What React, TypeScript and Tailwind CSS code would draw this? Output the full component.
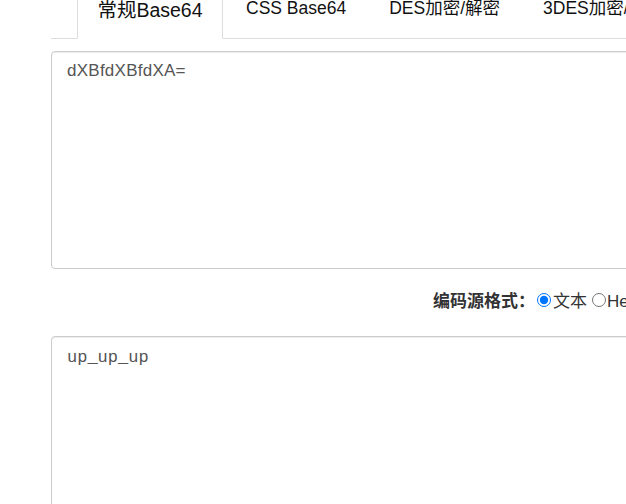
import React from "react";

export default function App() {
  const sans = '"Liberation Sans", "Noto Sans CJK SC", sans-serif';
  return (
    <div className="w-[626px] h-[504px] overflow-hidden bg-white" style={{ fontFamily: sans }}>
      <div className="w-[900px] pl-[51px]">
        {/* Tabs */}
        <ul className="flex h-[39px] border-b border-[#ddd]">
          <li className="ml-[26px] mr-[3px] -mb-px h-[39px] w-[146px] border border-t-0 border-[#ddd] border-b-white bg-white text-center text-[19.5px] leading-[20px] text-[#111]">
            常规Base64
          </li>
          <li className="mr-[3px] px-[20px] text-[17.5px] leading-[17px] text-[#111]">CSS Base64</li>
          <li className="mr-[3px] px-[20px] text-[17.5px] leading-[17px] text-[#111]">DES加密/解密</li>
          <li className="mr-[3px] px-[20px] text-[17.5px] leading-[17px] text-[#111]">3DES加密/解密</li>
        </ul>

        {/* First textarea */}
        <textarea
          readOnly
          defaultValue="dXBfdXBfdXA="
          className="mt-[12px] block h-[218px] w-[760px] resize-none rounded-[4px] border border-[#ccc] pl-[15px] pt-[6px] text-[17px] leading-[25px] tracking-[0.25px] text-[#555] shadow-[inset_0_1px_1px_rgba(0,0,0,0.075)] outline-none"
          style={{ fontFamily: sans }}
        />

        {/* Options row */}
        <div className="flex h-[67px] items-start pt-[21px]">
          <div className="ml-[382px] flex h-[24px] items-start text-[17px] leading-[24px] text-[#333]">
            <span className="font-bold">编码源格式：</span>
            <input type="radio" name="fmt" defaultChecked className="ml-[2px] mt-[3px] h-[14px] w-[14px]" />
            <span className="ml-[2px]">文本</span>
            <input type="radio" name="fmt" className="ml-[5px] mt-[3px] h-[14px] w-[14px]" />
            <span className="ml-[1px]">Hex</span>
          </div>
        </div>

        {/* Second textarea */}
        <textarea
          readOnly
          defaultValue="up_up_up"
          className="block h-[220px] w-[760px] resize-none rounded-[4px] border border-[#ccc] pl-[15px] pt-[8px] text-[17px] leading-[25px] text-[#555] shadow-[inset_0_1px_1px_rgba(0,0,0,0.075)] outline-none"
          style={{ fontFamily: '"Liberation Mono", "Courier New", monospace' }}
        />
      </div>
    </div>
  );
}
